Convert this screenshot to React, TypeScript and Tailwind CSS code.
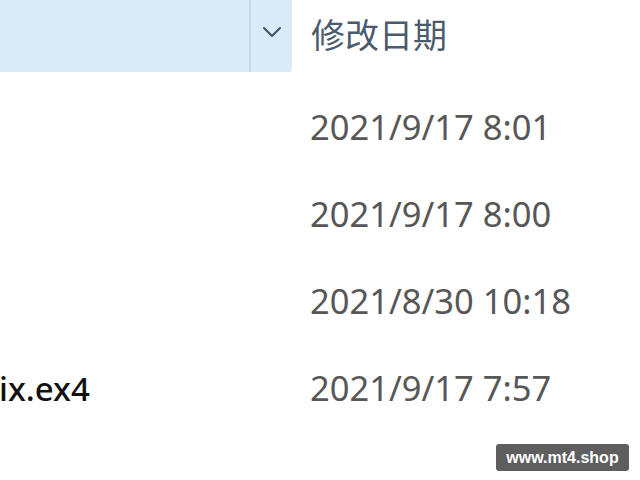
import { ChevronDown } from "lucide-react";

const rows = [
  { name: "", date: "2021/9/17 8:01" },
  { name: "", date: "2021/9/17 8:00" },
  { name: "", date: "2021/8/30 10:18" },
  { name: "ix.ex4", date: "2021/9/17 7:57" },
];

export default function App() {
  return (
    <div
      className="relative h-[480px] w-[640px] overflow-hidden bg-white"
      style={{ fontFamily: '"Noto Sans", "Noto Sans CJK SC", sans-serif' }}
    >
      {/* column header */}
      <div className="flex h-[72px]">
        <div className="flex w-[292px] rounded-br-[3px] bg-[#d9eaf9]">
          <div className="flex-1" />
          <div className="flex w-[43px] items-center justify-center border-l-2 border-[#c5d8ec] pb-[8px]">
            <ChevronDown className="h-[32px] w-[32px] text-[#44505e]" strokeWidth={1.5} />
          </div>
        </div>
        <div className="flex items-center pb-[2px] pl-[19px] text-[34px] leading-none text-[#4c5a6e]">
          修改日期
        </div>
      </div>

      {/* file rows */}
      <div className="flex flex-col pt-[12px]">
        {rows.map((row) => (
          <div key={row.date} className="flex h-[87px] items-center">
            <div className="-ml-[1px] w-[292px] text-[33px] font-medium leading-none text-[#111111]">
              {row.name}
            </div>
            <div className="pl-[19px] text-[34.5px] leading-none text-[#575757]">{row.date}</div>
          </div>
        ))}
      </div>

      {/* watermark */}
      <div
        className="absolute left-[496px] top-[444px] flex h-[27px] w-[133px] items-center justify-center rounded-[3px] bg-[#5e5e5e] text-[16px] font-bold text-white"
        style={{ fontFamily: '"Liberation Sans", Arial, sans-serif' }}
      >
        www.mt4.shop
      </div>
    </div>
  );
}
